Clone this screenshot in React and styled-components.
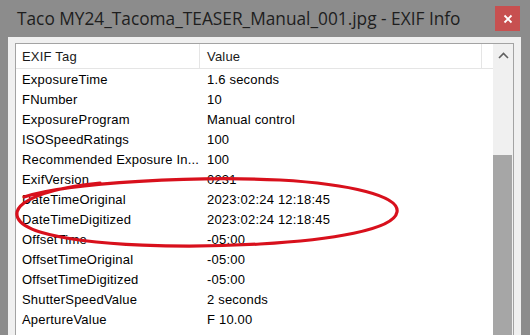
import React from "react";
import styled, { createGlobalStyle } from "styled-components";

const GlobalStyle = createGlobalStyle`
  html, body {
    margin: 0;
    padding: 0;
    background: #8c8c8c;
    overflow: hidden;
  }
`;

const Window = styled.div`
  position: relative;
  width: 530px;
  height: 335px;
  display: flex;
  flex-direction: column;
  background: #8c8c8c;
  overflow: hidden;
`;

const TitleBar = styled.div`
  height: 37px;
  flex: none;
  display: flex;
  align-items: center;
  justify-content: space-between;
  padding-left: 17px;
  box-sizing: border-box;
`;

const Title = styled.div`
  font-family: "Open Sans", "Noto Sans", sans-serif;
  font-size: 17.3px;
  color: #1e1e1e;
  white-space: nowrap;
  margin-top: -1px;
`;

const CloseButton = styled.div`
  width: 25px;
  height: 25px;
  margin-right: 10px;
  background: #c75050;
  display: flex;
  align-items: center;
  justify-content: center;
`;

const Client = styled.div`
  flex: 1;
  min-height: 0;
  margin: 0 9px 0 8px;
  padding: 6px 7px 0 7px;
  background: #f0f0f0;
  display: flex;
`;

const ListView = styled.div`
  flex: 1;
  display: flex;
  background: #fff;
  border: 1px solid #a3a3a3;
  border-bottom: none;
  overflow: hidden;
`;

const ListBody = styled.div`
  flex: 1;
  display: flex;
  flex-direction: column;
  font-family: "Liberation Sans", Arial, sans-serif;
  font-size: 13px;
  letter-spacing: 0.2px;
  color: #000;
`;

const Row = styled.div`
  display: grid;
  grid-template-columns: 184px 282px 1fr;
  height: ${(p) => (p.$header ? "24px" : "20px")};
  flex: none;
  border-bottom: ${(p) => (p.$header ? "1px solid #e5e5e5" : "none")};
`;

const Cell = styled.div`
  display: flex;
  align-items: center;
  padding-left: ${(p) => (p.$value ? "7px" : "6px")};
  white-space: nowrap;
  overflow: hidden;
  border-right: ${(p) => (p.$header ? "1px solid #e5e5e5" : "none")};
  color: ${(p) => (p.$header ? "#1a1a1a" : "#000")};
`;

const Scrollbar = styled.div`
  width: 20px;
  flex: none;
  display: flex;
  flex-direction: column;
  background: #f0f0f0;
`;

const ArrowButton = styled.div`
  height: 22px;
  flex: none;
  display: flex;
  align-items: center;
  justify-content: center;
`;

const Track = styled.div`
  flex: 1;
  padding-top: 89px;
`;

const Thumb = styled.div`
  height: 400px;
  margin: 0 1px 0 0;
  background: #a6a6a6;
`;

const Scribble = styled.svg`
  position: absolute;
  left: 0;
  top: 0;
  pointer-events: none;
`;

const rows = [
  ["ExposureTime", "1.6 seconds"],
  ["FNumber", "10"],
  ["ExposureProgram", "Manual control"],
  ["ISOSpeedRatings", "100"],
  ["Recommended Exposure In...", "100"],
  ["ExifVersion", "0231"],
  ["DateTimeOriginal", "2023:02:24 12:18:45"],
  ["DateTimeDigitized", "2023:02:24 12:18:45"],
  ["OffsetTime", "-05:00"],
  ["OffsetTimeOriginal", "-05:00"],
  ["OffsetTimeDigitized", "-05:00"],
  ["ShutterSpeedValue", "2 seconds"],
  ["ApertureValue", "F 10.00"],
  ["BrightnessValue", "-0.51"],
];

export default function App() {
  return (
    <>
      <GlobalStyle />
      <Window>
        <TitleBar>
          <Title>Taco MY24_Tacoma_TEASER_Manual_001.jpg - EXIF Info</Title>
          <CloseButton>
            <svg width="10" height="10" viewBox="0 0 10 10">
              <path d="M1.5 1.5 L8.5 8.5 M8.5 1.5 L1.5 8.5" stroke="#fff" strokeWidth="1.8" />
            </svg>
          </CloseButton>
        </TitleBar>
        <Client>
          <ListView>
            <ListBody>
              <Row $header>
                <Cell $header>EXIF Tag</Cell>
                <Cell $header $value>Value</Cell>
                <Cell />
              </Row>
              {rows.map(([tag, value]) => (
                <Row key={tag}>
                  <Cell>{tag}</Cell>
                  <Cell $value>{value}</Cell>
                  <Cell />
                </Row>
              ))}
            </ListBody>
            <Scrollbar>
              <ArrowButton>
                <svg width="11" height="7" viewBox="0 0 11 7">
                  <path d="M1 6 L5.5 1.5 L10 6" fill="none" stroke="#606060" strokeWidth="1.6" />
                </svg>
              </ArrowButton>
              <Track>
                <Thumb />
              </Track>
            </Scrollbar>
          </ListView>
        </Client>
        <Scribble width="530" height="335" viewBox="0 0 530 335">
          <path
            d="M24 197 C 70 182, 200 176, 280 180 C 350 184, 400 196, 397 212 C 394 230, 330 240, 260 244 C 190 248, 90 247, 40 232 C 14 224, 12 212, 24 203 C 40 192, 70 186, 100 183"
            fill="none"
            stroke="#d8101c"
            strokeWidth="3.2"
            strokeLinecap="round"
          />
        </Scribble>
      </Window>
    </>
  );
}
